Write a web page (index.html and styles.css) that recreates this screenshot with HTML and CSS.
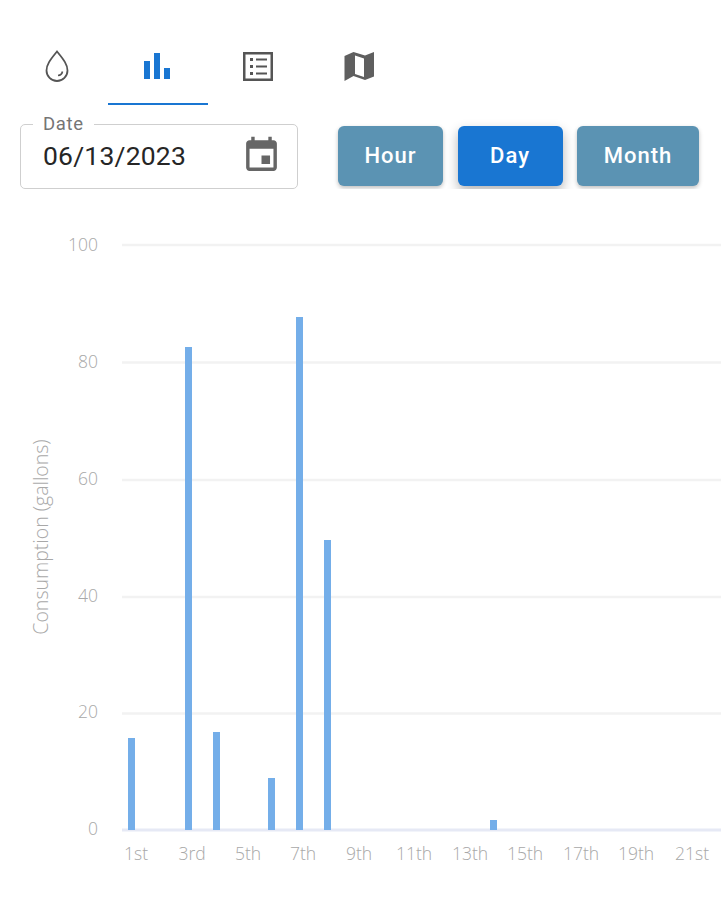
FILE: index.html
```html
<!DOCTYPE html>
<html lang="en">
<head>
    <meta charset="UTF-8">
    <meta name="viewport" content="width=device-width, initial-scale=1.0">
    <title>Water consumption</title>
    <link rel="stylesheet" href="styles.css">
</head>
<body>
<nav class="tabs">
    <button class="tab" aria-label="Water">
        <svg viewBox="0 0 32 32" width="32" height="32" fill="none" stroke="#555" stroke-width="1.8">
            <path d="M16 1.5C10 9 5.5 14 5.5 20.5a10.500 10.500 0 0 0 21 0C26.500 14 22 9 16 1.500z"/>
            <path d="M21.500 21.500a5 5 0 0 1-4.500 4" stroke-width="1.6"/>
        </svg>
    </button>
    <button class="tab tab-active" aria-label="Chart">
        <svg viewBox="0 0 32 32" width="32" height="32" fill="#1976d2">
            <rect x="2" y="11" width="6" height="18"/>
            <rect x="12" y="3" width="6" height="26"/>
            <rect x="22" y="18" width="6" height="11"/>
        </svg>
    </button>
    <button class="tab" aria-label="List">
        <svg viewBox="0 0 32 32" width="32" height="32" fill="#555">
            <path d="M1 2h30v29H1zm2.500 2.500v24h25v-24z" fill-rule="evenodd"/>
            <rect x="8" y="8" width="3" height="3"/>
            <rect x="8" y="15" width="3" height="3"/>
            <rect x="8" y="22" width="3" height="3"/>
            <rect x="14" y="8.500" width="11" height="2"/>
            <rect x="14" y="15.500" width="11" height="2"/>
            <rect x="14" y="22.500" width="11" height="2"/>
        </svg>
    </button>
    <button class="tab" aria-label="Map">
        <svg viewBox="0 0 32 32" width="32" height="32" fill="#5f5f5f">
            <path d="M1.500 6 10.500 2 22 5.500 31 2v24.500L22 30l-11.500-4L1.500 31zM12 5.500v18.500l9 3V8.500z" fill-rule="evenodd"/>
        </svg>
    </button>
</nav>

<div class="controls">
    <div class="date-field">
        <span class="date-label">Date</span>
        <span class="date-value">06/13/2023</span>
        <svg class="date-icon" viewBox="0 0 24 24" width="41" height="41" fill="#666">
            <path d="M17 12h-5v5h5v-5zM16 1v2H8V1H6v2H5c-1.100 0-2 .9-2 2v14c0 1.100.9 2 2 2h14c1.100 0 2-.9 2-2V5c0-1.100-.9-2-2-2h-1V1h-2zm3 18H5V8h14v11z"/>
        </svg>
    </div>
    <div class="range-buttons">
        <button class="range-btn range-hour">Hour</button>
        <button class="range-btn range-day range-active">Day</button>
        <button class="range-btn range-month">Month</button>
    </div>
</div>

<svg class="chart" width="721" height="690" viewBox="0 210 721 690">
    <g class="grid">
        <line x1="122" x2="721" y1="245" y2="245"/>
        <line x1="122" x2="721" y1="362.5" y2="362.5"/>
        <line x1="122" x2="721" y1="480" y2="480"/>
        <line x1="122" x2="721" y1="597" y2="597"/>
        <line x1="122" x2="721" y1="713.5" y2="713.5"/>
    </g>
    <line class="axis" x1="122" x2="721" y1="830" y2="830"/>
    <g class="bars">
        <rect x="128" y="738" width="7" height="92"/>
        <rect x="185" y="347" width="7" height="483"/>
        <rect x="213" y="732" width="7" height="98"/>
        <rect x="268" y="778" width="7" height="52"/>
        <rect x="296" y="317" width="7" height="513"/>
        <rect x="324" y="540" width="7" height="290"/>
        <rect x="490" y="820" width="7" height="10"/>
    </g>
    <g class="y-ticks">
        <text x="98" y="251">100</text>
        <text x="98" y="368">80</text>
        <text x="98" y="485">60</text>
        <text x="98" y="602">40</text>
        <text x="98" y="718">20</text>
        <text x="98" y="835">0</text>
    </g>
    <text class="y-title" transform="translate(48 537) rotate(-90)">Consumption (gallons)</text>
    <g class="x-ticks">
        <text x="136" y="860">1st</text>
        <text x="192" y="860">3rd</text>
        <text x="248" y="860">5th</text>
        <text x="303" y="860">7th</text>
        <text x="359" y="860">9th</text>
        <text x="414" y="860">11th</text>
        <text x="470" y="860">13th</text>
        <text x="525" y="860">15th</text>
        <text x="581" y="860">17th</text>
        <text x="636" y="860">19th</text>
        <text x="692" y="860">21st</text>
    </g>
</svg>
</body>
</html>
```

FILE: styles.css
```css
body {
    margin: 0;
    background: #fff;
    font-family: Roboto, "Liberation Sans", sans-serif;
    overflow: hidden;
}

button {
    font-family: inherit;
    border: none;
    cursor: pointer;
}

.tabs {
    display: flex;
    padding: 26px 0 0 7px;
}

.tab {
    width: 100.5px;
    height: 79px;
    padding: 3px 0 0;
    background: none;
    display: flex;
    align-items: center;
    justify-content: center;
    border-bottom: 2px solid transparent;
    box-sizing: border-box;
}

.tab-active {
    border-bottom-color: #1976d2;
}

.controls {
    display: flex;
    align-items: center;
    margin-top: 19px;
    padding-left: 20px;
}

.date-field {
    position: relative;
    box-sizing: border-box;
    width: 278px;
    height: 65px;
    border: 1px solid #cfcfcf;
    border-radius: 5px;
    display: flex;
    align-items: center;
    justify-content: space-between;
    padding: 0 15px 0 22px;
}

.date-label {
    position: absolute;
    top: -11px;
    left: 12px;
    padding: 0 10px;
    background: #fff;
    font-size: 18.5px;
    letter-spacing: 0.7px;
    color: #757575;
    line-height: 20px;
}

.date-value {
    font-size: 26.5px;
    color: #262626;
    letter-spacing: 0.2px;
    margin-top: -2px;
}

.date-icon {
    flex: none;
    margin-top: -2px;
}

.range-buttons {
    display: flex;
    gap: 14.5px;
    margin: -2px 0 0 40px;
}

.range-btn {
    height: 60px;
    border-radius: 6px;
    color: #fff;
    background: #5b93b3;
    font-size: 22px;
    font-weight: 500;
    letter-spacing: 1px;
    box-shadow: 0 2px 4px rgba(0, 0, 0, 0.25);
}

.range-hour, .range-day {
    width: 105px;
}

.range-month {
    width: 122px;
}

.range-active {
    background: #1976d2;
    box-shadow: 0 5px 12px rgba(0, 0, 0, 0.3);
}

.chart {
    position: absolute;
    left: 0;
    top: 210px;
}

.grid line {
    stroke: #f2f2f2;
    stroke-width: 2.5;
}

.axis {
    stroke: #e6e9f5;
    stroke-width: 3;
}

.bars rect {
    fill: #74aee9;
}

.chart text {
    font-family: "Open Sans", sans-serif;
    font-size: 17.5px;
    font-weight: 300;
    fill: #a8a8a8;
}

.chart .y-title {
    font-size: 19.5px;
}

.y-ticks text {
    text-anchor: end;
}

.x-ticks text, .y-title {
    text-anchor: middle;
}
```
